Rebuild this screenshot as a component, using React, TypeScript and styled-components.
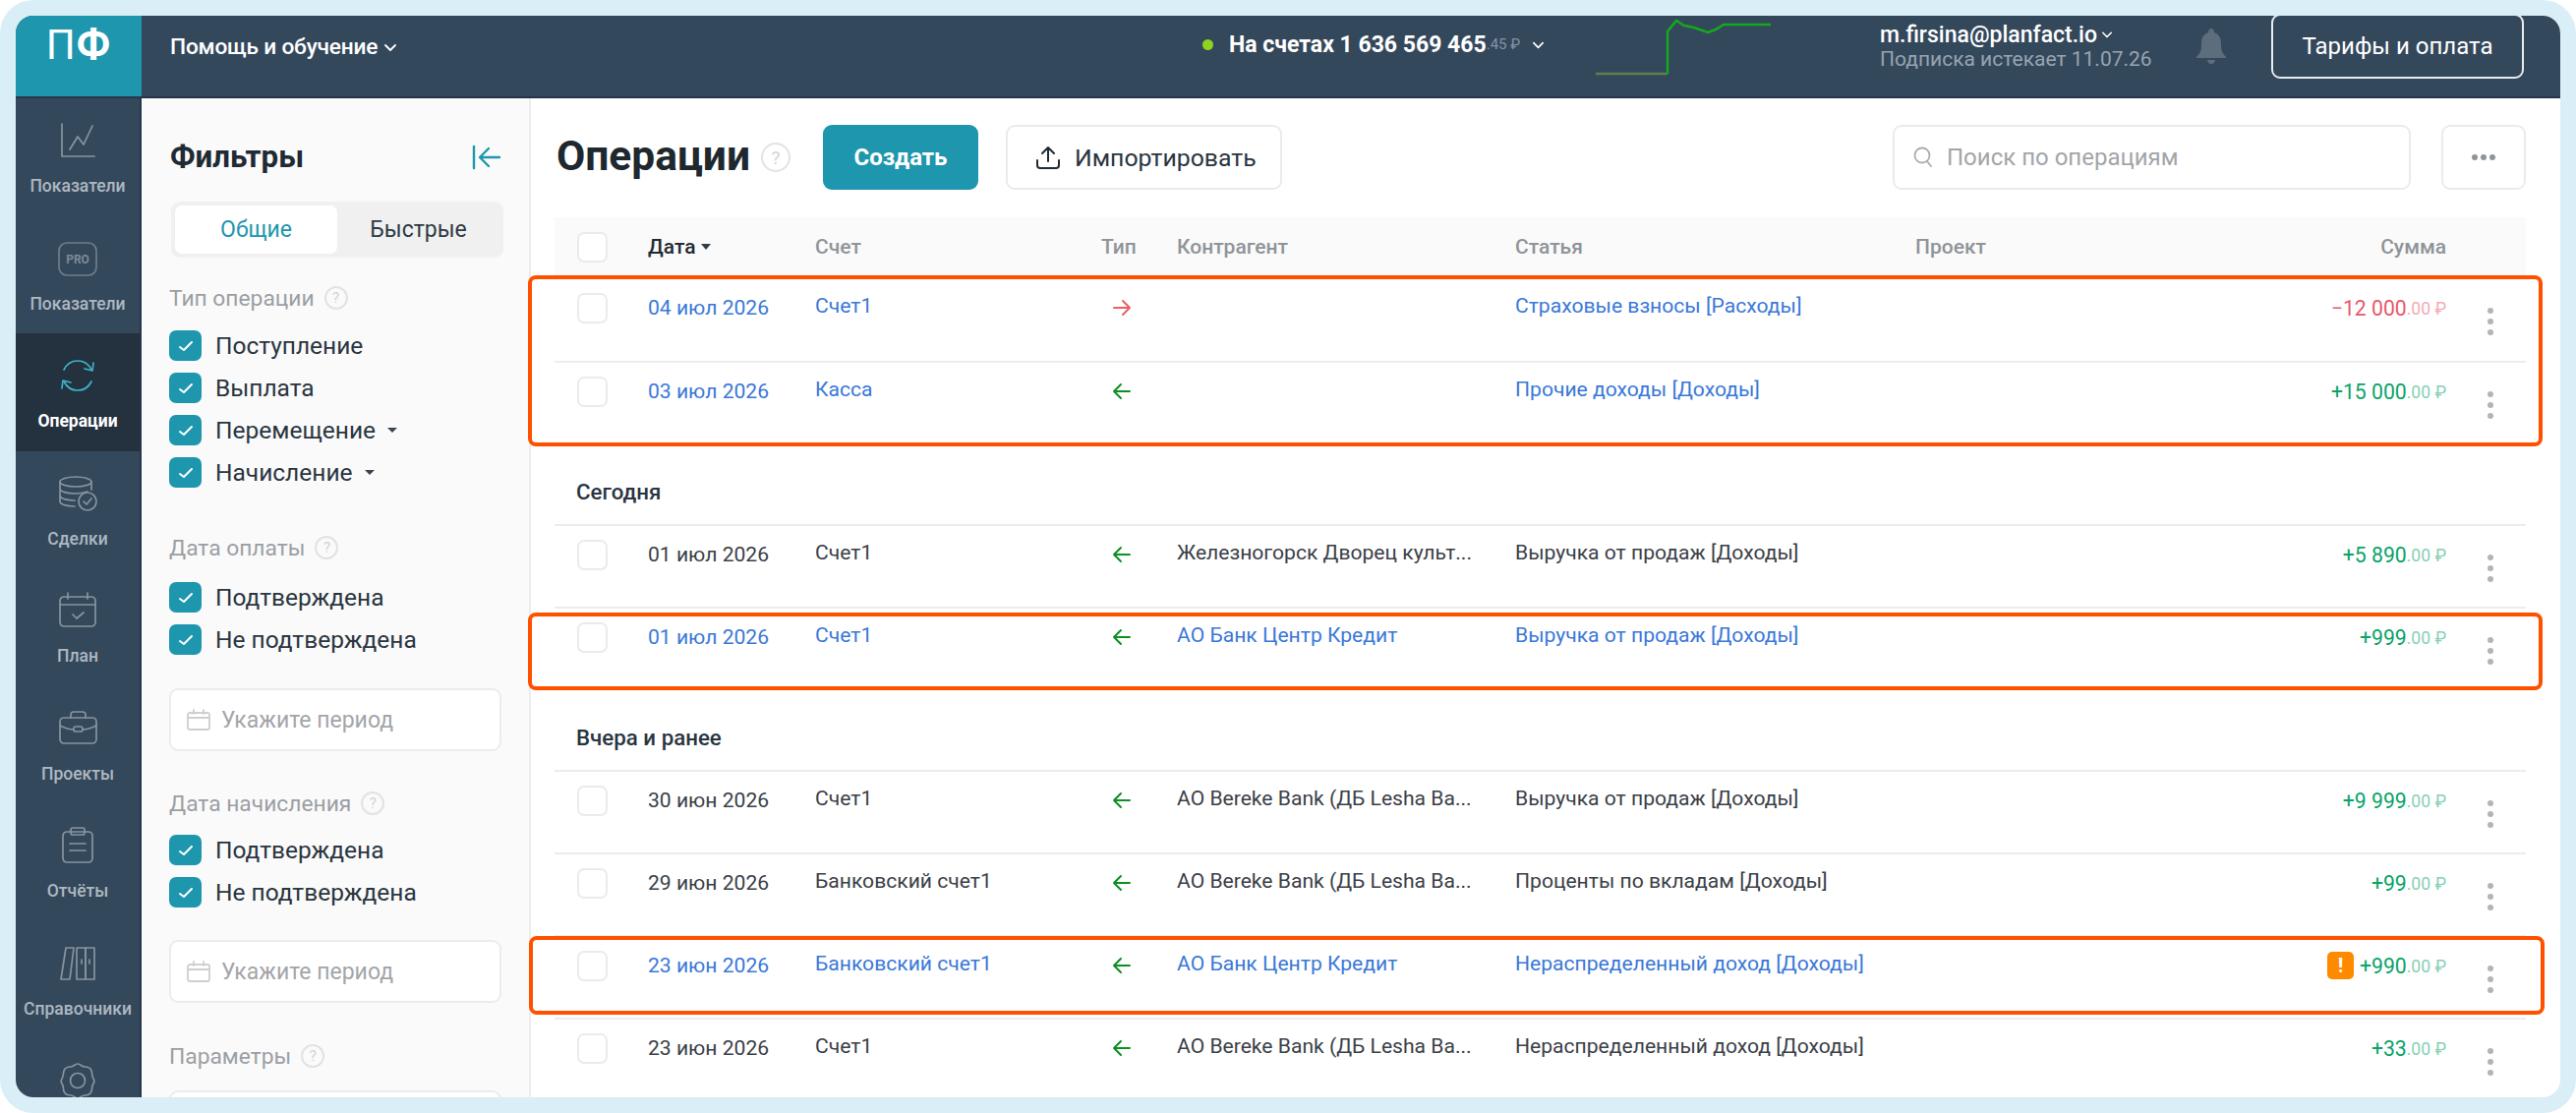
import React from 'react';
import styled, { createGlobalStyle } from 'styled-components';

const GlobalStyle = createGlobalStyle`
  html, body { margin: 0; padding: 0; background: #fff; }
  * { box-sizing: border-box; }
  body { font-family: Roboto, "Noto Sans", sans-serif; color: #222b33; }
`;

const Icon: React.FC<{ size?: number; h?: number; color?: string; sw?: number; vb?: string; children: React.ReactNode }> = ({
  size = 40,
  h,
  color = 'currentColor',
  sw = 1.7,
  vb = '0 0 40 40',
  children,
}) => (
  <svg width={size} height={h ?? size} viewBox={vb} fill="none" stroke={color} strokeWidth={sw} strokeLinecap="round" strokeLinejoin="round">
    {children}
  </svg>
);

const navItems: { label?: string; active?: boolean; icon: React.ReactNode }[] = [
  {
    label: 'Показатели',
    icon: (
      <>
        <path d="M4 3v33h33" />
        <path d="M12 29l8-13 6 8 9-19" />
      </>
    ),
  },
  {
    label: 'Показатели',
    icon: (
      <>
        <rect x="1" y="4" width="38" height="33" rx="8" opacity="0.7" />
        <text x="20" y="25" textAnchor="middle" fontSize="12" fontWeight="700" fill="#7c8a97" stroke="none" fontFamily="Roboto">
          PRO
        </text>
      </>
    ),
  },
  {
    label: 'Операции',
    active: true,
    icon: (
      <>
        <path d="M6 14c3-6 8-9 14-9s11 3 14 9" />
        <path d="M36 7l-1 8-8-2" />
        <path d="M34 26c-3 6-8 9-14 9S9 32 6 26" />
        <path d="M4 33l1-8 8 2" />
      </>
    ),
  },
  {
    label: 'Сделки',
    icon: (
      <>
        <ellipse cx="18" cy="8" rx="16" ry="5" />
        <path d="M2 8v20c0 3 7 5 15 5M34 8v8M2 15c0 3 7 5 16 5 5 0 9-1 12-2M2 22c0 3 7 5 15 5" />
        <circle cx="30" cy="28" r="9" />
        <path d="M26 28l3 3 5-6" />
      </>
    ),
  },
  {
    label: 'План',
    icon: (
      <>
        <rect x="2" y="6" width="36" height="30" rx="4" />
        <path d="M2 14h36M10 2v6M30 2v6M15 24l4 4 7-6" />
      </>
    ),
  },
  {
    label: 'Проекты',
    icon: (
      <>
        <rect x="2" y="9" width="37" height="26" rx="4" />
        <path d="M13 9V6c0-2 1-3 3-3h9c2 0 3 1 3 3v3M2 17c6 3 11 4 14 4M39 17c-6 3-11 4-14 4" />
        <rect x="16" y="18" width="9" height="5" rx="2" />
      </>
    ),
  },
  {
    label: 'Отчёты',
    icon: (
      <>
        <rect x="5" y="6" width="30" height="31" rx="4" />
        <rect x="13" y="2" width="14" height="7" rx="2" />
        <path d="M12 18h16M12 25h16" />
      </>
    ),
  },
  {
    label: 'Справочники',
    icon: (
      <>
        <path d="M8 4h8l-4 32H3z" />
        <rect x="19" y="4" width="9" height="32" />
        <rect x="28" y="4" width="9" height="32" />
        <path d="M24 16v4M32 16v4" />
      </>
    ),
  },
  {
    icon: (
      <>
        <path d="M20 3c3 0 4 3 7 3s6 1 7 4 0 5 2 8c1 2 1 4 0 5-2 3-1 5-2 8s-4 4-7 4-4 3-7 3-4-3-7-3-6-1-7-4 0-5-2-8c-1-1-1-3 0-5 2-3 1-5 2-8s4-4 7-4 4-3 7-3z" />
        <circle cx="20" cy="20" r="7.5" />
      </>
    ),
  },
];

type Op = {
  date: string;
  account: string;
  dir: 'in' | 'out';
  partner?: string;
  article: string;
  whole: string;
  link?: boolean;
  warn?: boolean;
};

const topOps: Op[] = [
  { date: '04 июл 2026', account: 'Счет1', dir: 'out', article: 'Страховые взносы [Расходы]', whole: '−12 000', link: true },
  { date: '03 июл 2026', account: 'Касса', dir: 'in', article: 'Прочие доходы [Доходы]', whole: '+15 000', link: true },
];

const todayOps: Op[] = [
  { date: '01 июл 2026', account: 'Счет1', dir: 'in', partner: 'Железногорск Дворец культ...', article: 'Выручка от продаж [Доходы]', whole: '+5 890' },
  { date: '01 июл 2026', account: 'Счет1', dir: 'in', partner: 'АО Банк Центр Кредит', article: 'Выручка от продаж [Доходы]', whole: '+999', link: true },
];

const pastOps: Op[] = [
  { date: '30 июн 2026', account: 'Счет1', dir: 'in', partner: 'АО Bereke Bank (ДБ Lesha Ba...', article: 'Выручка от продаж [Доходы]', whole: '+9 999' },
  { date: '29 июн 2026', account: 'Банковский счет1', dir: 'in', partner: 'АО Bereke Bank (ДБ Lesha Ba...', article: 'Проценты по вкладам [Доходы]', whole: '+99' },
  { date: '23 июн 2026', account: 'Банковский счет1', dir: 'in', partner: 'АО Банк Центр Кредит', article: 'Нераспределенный доход [Доходы]', whole: '+990', link: true, warn: true },
  { date: '23 июн 2026', account: 'Счет1', dir: 'in', partner: 'АО Bereke Bank (ДБ Lesha Ba...', article: 'Нераспределенный доход [Доходы]', whole: '+33' },
];

const Check = () => (
  <CheckBox>
    <svg width="16" height="14" viewBox="0 0 16 14" fill="none" stroke="#fff" strokeWidth="2" strokeLinecap="round" strokeLinejoin="round">
      <path d="M2 8l4 3 8-8" />
    </svg>
  </CheckBox>
);

const Help = () => <HelpMark>?</HelpMark>;

const CalendarIcon = () => (
  <Icon size={24} h={22} vb="0 0 24 22" color="#cfcfcf" sw={1.8}>
    <rect x="1" y="4" width="22" height="17" rx="2" />
    <path d="M1 9h22M7 1v4M17 1v4" />
  </Icon>
);

const Chevron: React.FC<{ size?: number }> = ({ size = 14 }) => (
  <svg width={size} height={size} viewBox="0 0 14 14" fill="none" stroke="#fff" strokeWidth="1.8" strokeLinecap="round" strokeLinejoin="round">
    <path d="M2 5l5 5 5-5" />
  </svg>
);

const OpRow: React.FC<{ op: Op }> = ({ op }) => (
  <Row>
    <CheckCell>
      <EmptyBox />
    </CheckCell>
    <DateCell $link={op.link}>{op.date}</DateCell>
    <TextCell $link={op.link}>{op.account}</TextCell>
    <ArrowCell>
      <svg width="20" height="18" viewBox="0 0 20 18" fill="none" stroke={op.dir === 'in' ? '#0d9021' : '#ec5f63'} strokeWidth="2" strokeLinecap="round" strokeLinejoin="round">
        {op.dir === 'in' ? <path d="M18 9H2M9 2L2 9l7 7" /> : <path d="M2 9h16M11 2l7 7-7 7" />}
      </svg>
    </ArrowCell>
    <TextCell $link={op.link}>{op.partner}</TextCell>
    <TextCell $link={op.link}>{op.article}</TextCell>
    <AmountCell $out={op.dir === 'out'}>
      {op.warn && <WarnBadge>!</WarnBadge>}
      <strong>{op.whole}</strong>
      <small>.00 ₽</small>
    </AmountCell>
    <DotsCell>
      <i />
      <i />
      <i />
    </DotsCell>
  </Row>
);

const App: React.FC = () => (
  <Frame>
    <GlobalStyle />
    <Window>
      <TopBar>
        <Logo>
          П<b>Ф</b>
        </Logo>
        <HelpMenu>
          Помощь и обучение <Chevron />
        </HelpMenu>
        <Balance>
          <GreenDot />
          <span>На счетах 1 636 569 465</span>
          <small>.45 ₽</small>
          <Chevron size={13} />
        </Balance>
        <Spark>
          <svg width="178" height="62" viewBox="0 0 178 62" fill="none" strokeWidth="2.5">
            <path d="M0 57H73" stroke="#5e7f4d" />
            <path d="M73 57V14L82 3l8 5 10 2 14 5 8-3 8-5h48" stroke="#13a81f" />
          </svg>
        </Spark>
        <UserBlock>
          <UserMail>
            m.firsina@planfact.io <Chevron size={12} />
          </UserMail>
          <UserSub>Подписка истекает 11.07.26</UserSub>
        </UserBlock>
        <Bell>
          <svg width="32" height="36" viewBox="0 0 32 36" fill="#5c6d7c">
            <path d="M16 0c2 0 3 2 3 4 6 2 7 7 7 13 0 6 2 9 5 12v1H1v-1c3-3 5-6 5-12 0-6 1-11 7-13 0-2 1-4 3-4z" />
            <path d="M12 32h8c0 2-2 4-4 4s-4-2-4-4z" />
          </svg>
        </Bell>
        <TariffButton>Тарифы и оплата</TariffButton>
      </TopBar>

      <Body>
        <Sidebar>
          {navItems.map((item, i) => (
            <NavItem key={i} $active={item.active}>
              <NavIcon>
                <Icon>{item.icon}</Icon>
              </NavIcon>
              {item.label && <NavLabel $active={item.active}>{item.label}</NavLabel>}
            </NavItem>
          ))}
        </Sidebar>

        <Filters>
          <FiltersHead>
            <FiltersTitle>Фильтры</FiltersTitle>
            <svg width="30" height="26" viewBox="0 0 30 26" fill="none" stroke="#1e96ae" strokeWidth="2.4" strokeLinecap="round" strokeLinejoin="round">
              <path d="M2 2v22M28 13H9M17 4l-9 9 9 9" />
            </svg>
          </FiltersHead>
          <Tabs>
            <Tab $active>Общие</Tab>
            <Tab>Быстрые</Tab>
          </Tabs>

          <GroupTitle $gap={26} $after={18}>
            Тип операции <Help />
          </GroupTitle>
          <CheckRow>
            <Check /> Поступление
          </CheckRow>
          <CheckRow>
            <Check /> Выплата
          </CheckRow>
          <CheckRow>
            <Check /> Перемещение <Caret />
          </CheckRow>
          <CheckRow>
            <Check /> Начисление <Caret />
          </CheckRow>

          <GroupTitle $gap={46} $after={20}>
            Дата оплаты <Help />
          </GroupTitle>
          <CheckRow>
            <Check /> Подтверждена
          </CheckRow>
          <CheckRow>
            <Check /> Не подтверждена
          </CheckRow>
          <PeriodInput $top={34}>
            <CalendarIcon /> Укажите период
          </PeriodInput>

          <GroupTitle $gap={38} $after={17}>
            Дата начисления <Help />
          </GroupTitle>
          <CheckRow>
            <Check /> Подтверждена
          </CheckRow>
          <CheckRow>
            <Check /> Не подтверждена
          </CheckRow>
          <PeriodInput $top={33}>
            <CalendarIcon /> Укажите период
          </PeriodInput>

          <GroupTitle $gap={39} $after={20}>
            Параметры <Help />
          </GroupTitle>
          <PeriodInput $top={20} />
        </Filters>

        <Main>
          <Toolbar>
            <PageTitle>Операции</PageTitle>
            <PageHelp>?</PageHelp>
            <CreateButton>Создать</CreateButton>
            <ImportButton>
              <svg width="26" height="26" viewBox="0 0 26 26" fill="none" stroke="#222b33" strokeWidth="2" strokeLinecap="round" strokeLinejoin="round">
                <path d="M13 17V3M7 9l6-6 6 6M2 16v5c0 2 1 3 3 3h16c2 0 3-1 3-3v-5" />
              </svg>
              Импортировать
            </ImportButton>
            <SearchBox>
              <svg width="20" height="22" viewBox="0 0 20 22" fill="none" stroke="#a9adb2" strokeWidth="1.8" strokeLinecap="round">
                <circle cx="9" cy="9" r="7.5" />
                <path d="M14 15l4 5" />
              </svg>
              Поиск по операциям
            </SearchBox>
            <MoreButton>
              <i />
              <i />
              <i />
            </MoreButton>
          </Toolbar>

          <HeadRow>
            <CheckCell>
              <EmptyBox />
            </CheckCell>
            <HeadCell $strong>
              Дата <SortCaret />
            </HeadCell>
            <HeadCell>Счет</HeadCell>
            <HeadCell>Тип</HeadCell>
            <HeadCell>Контрагент</HeadCell>
            <HeadCell>Статья</HeadCell>
            <HeadCell>Проект</HeadCell>
            <HeadCell $right>Сумма</HeadCell>
          </HeadRow>

          {topOps.map((op) => (
            <OpRow key={op.date} op={op} />
          ))}
          <Section>Сегодня</Section>
          {todayOps.map((op, i) => (
            <OpRow key={i} op={op} />
          ))}
          <Section>Вчера и ранее</Section>
          {pastOps.map((op, i) => (
            <OpRow key={i} op={op} />
          ))}
        </Main>
      </Body>

      <Highlight $top={264} $height={174} $left={521} $width={2049} />
      <Highlight $top={607} $height={79} $left={521} $width={2049} />
      <Highlight $top={936} $height={80} $left={522} $width={2050} />
    </Window>
  </Frame>
);

export default App;

const tableColumns = '95px 170px 291px 77px 344px 407px 200px 340px 81px';

const Frame = styled.div`
  width: 2620px;
  height: 1132px;
  padding: 16px;
  border-radius: 34px;
  background: #d9eef6;
`;

const Window = styled.div`
  position: relative;
  display: flex;
  flex-direction: column;
  width: 2588px;
  height: 1100px;
  overflow: hidden;
  border-radius: 18px;
  background: #fff;
`;

const TopBar = styled.header`
  display: grid;
  grid-template-columns: 128px 1078px 401px 289px 320px 78px 257px;
  flex: 0 0 83px;
  background: #34485c;
  border-bottom: 2px solid #25364a;
  color: #fff;
`;

const Logo = styled.div`
  height: 82px;
  padding: 8px 0 0 0;
  background: #1e96ae;
  font-size: 42px;
  line-height: 44px;
  font-weight: 400;
  text-align: center;
  letter-spacing: 1px;

  b {
    font-weight: 700;
  }
`;

const HelpMenu = styled.div`
  display: flex;
  align-items: center;
  gap: 6px;
  height: 62px;
  padding-left: 29px;
  font-size: 22.7px;
  font-weight: 500;
  letter-spacing: -0.2px;

  svg {
    margin-top: 2px;
  }
`;

const Balance = styled.div`
  display: flex;
  align-items: center;
  height: 58px;
  font-size: 23px;
  font-weight: 700;

  small {
    margin-right: 12px;
    font-size: 15px;
    font-weight: 400;
    color: #8293a3;
  }
`;

const GreenDot = styled.span`
  width: 11px;
  height: 11px;
  margin: 0 16px 0 1px;
  border-radius: 50%;
  background: #8fd321;
`;

const Spark = styled.div`
  padding-top: 2px;
`;

const UserBlock = styled.div`
  padding-top: 5px;
`;

const UserMail = styled.div`
  display: flex;
  align-items: center;
  gap: 4px;
  height: 28px;
  font-size: 23px;
  font-weight: 500;
`;

const UserSub = styled.div`
  margin-top: -2px;
  font-size: 21px;
  line-height: 26px;
  color: #97a4b0;
`;

const Bell = styled.div`
  padding: 13px 0 0 1px;
`;

const TariffButton = styled.button`
  width: 257px;
  height: 66px;
  margin-top: -2px;
  border: 2px solid #e8ecef;
  border-radius: 9px;
  background: transparent;
  color: #fff;
  font: 400 24px Roboto, sans-serif;
`;

const Body = styled.div`
  display: flex;
  flex: 1;
  min-height: 0;
`;

const Sidebar = styled.nav`
  flex: 0 0 128px;
  background: #34485c;
  border-right: 2px solid #25364a;
`;

const NavItem = styled.div<{ $active?: boolean }>`
  height: 119.5px;
  background: ${(p) => (p.$active ? '#24313f' : 'transparent')};
  color: ${(p) => (p.$active ? '#3fb2c9' : '#87949f')};
  text-align: center;
`;

const NavIcon = styled.div`
  display: flex;
  justify-content: center;
  height: 77px;
  padding-top: 23px;
`;

const NavLabel = styled.div<{ $active?: boolean }>`
  font-size: 17.5px;
  line-height: 24px;
  font-weight: ${(p) => (p.$active ? 700 : 500)};
  color: ${(p) => (p.$active ? '#fff' : '#aeb8c1')};
`;

const Filters = styled.aside`
  flex: 0 0 396px;
  padding: 0 26px 0 28px;
  background: #fafafa;
  border-right: 2px solid #ededed;
  overflow: hidden;
`;

const FiltersHead = styled.div`
  display: flex;
  align-items: center;
  justify-content: space-between;
  height: 40px;
  margin-top: 40px;
  padding: 0 2px 0 1px;
`;

const FiltersTitle = styled.h2`
  margin: 0;
  font-size: 31.3px;
  line-height: 40px;
  font-weight: 700;
  color: #1f2a33;
`;

const Tabs = styled.div`
  display: grid;
  grid-template-columns: 165px 1fr;
  height: 57px;
  margin: 25px 0 0 2px;
  padding: 4px;
  border-radius: 9px;
  background: #f0f0f0;
`;

const Tab = styled.div<{ $active?: boolean }>`
  display: flex;
  align-items: center;
  justify-content: center;
  border-radius: 7px;
  background: ${(p) => (p.$active ? '#fff' : 'transparent')};
  color: ${(p) => (p.$active ? '#1e96ae' : '#2e3a44')};
  font-size: 23px;
`;

const GroupTitle = styled.div<{ $gap: number; $after: number }>`
  display: flex;
  align-items: center;
  gap: 10px;
  height: 30px;
  margin: ${(p) => p.$gap}px 0 ${(p) => p.$after}px;
  font-size: 22.8px;
  color: #9b9fa4;
`;

const HelpMark = styled.span`
  display: inline-flex;
  align-items: center;
  justify-content: center;
  width: 24px;
  height: 24px;
  border: 2px solid #e2e2e2;
  border-radius: 50%;
  font-size: 15px;
  color: #d2d2d2;
`;

const CheckRow = styled.div`
  display: flex;
  align-items: center;
  gap: 14px;
  height: 31px;
  margin-bottom: 12px;
  font-size: 24.5px;
  color: #2a3540;
`;

const CheckBox = styled.span`
  display: flex;
  align-items: center;
  justify-content: center;
  flex: 0 0 33px;
  height: 31px;
  border-radius: 7px;
  background: #1e96ae;
`;

const Caret = styled.span`
  width: 0;
  height: 0;
  margin-left: -2px;
  border-left: 5px solid transparent;
  border-right: 5px solid transparent;
  border-top: 5px solid #3a444e;
`;

const PeriodInput = styled.div<{ $top: number }>`
  display: flex;
  align-items: center;
  gap: 11px;
  width: 338px;
  height: 64px;
  margin-top: ${(p) => p.$top}px;
  padding-left: 16px;
  border: 2px solid #ececef;
  border-radius: 9px;
  background: #fff;
  font-size: 23px;
  color: #a3a5a8;
`;

const Main = styled.main`
  flex: 1;
  min-width: 0;
  padding: 0 35px 0 24px;
  overflow: hidden;
`;

const Toolbar = styled.div`
  display: flex;
  align-items: center;
  height: 66px;
  margin-top: 27px;
`;

const PageTitle = styled.h1`
  margin: -3px 0 0 2px;
  font-size: 42.5px;
  font-weight: 700;
  color: #20282f;
`;

const PageHelp = styled.span`
  display: flex;
  align-items: center;
  justify-content: center;
  width: 30px;
  height: 30px;
  margin: 0 33px 0 11px;
  border: 2px solid #e3e3e3;
  border-radius: 50%;
  color: #d5d5d5;
  font-size: 19px;
`;

const CreateButton = styled.button`
  width: 158px;
  height: 66px;
  border: 0;
  border-radius: 9px;
  background: #1e96ae;
  color: #fff;
  font: 700 24px Roboto, sans-serif;
`;

const ImportButton = styled.button`
  display: flex;
  align-items: center;
  gap: 14px;
  width: 281px;
  height: 66px;
  margin-left: 28px;
  padding-left: 28px;
  border: 2px solid #ebebef;
  border-radius: 9px;
  background: #fff;
  color: #2a3540;
  font: 400 24.8px Roboto, sans-serif;
`;

const SearchBox = styled.div`
  display: flex;
  align-items: center;
  gap: 14px;
  width: 527px;
  height: 66px;
  margin-left: auto;
  padding-left: 19px;
  border: 2px solid #ebebef;
  border-radius: 9px;
  font-size: 24px;
  color: #a3a5a8;
`;

const MoreButton = styled.div`
  display: flex;
  align-items: center;
  justify-content: center;
  gap: 3px;
  width: 86px;
  height: 66px;
  margin-left: 31px;
  border: 2px solid #ebebef;
  border-radius: 9px;

  i {
    width: 6px;
    height: 6px;
    border-radius: 50%;
    background: #8f9499;
  }
`;

const HeadRow = styled.div`
  display: grid;
  grid-template-columns: ${tableColumns};
  align-items: center;
  height: 60px;
  margin-top: 28px;
  background: #fafafa;
`;

const HeadCell = styled.div<{ $strong?: boolean; $right?: boolean }>`
  display: flex;
  align-items: center;
  gap: 6px;
  grid-column: ${(p) => (p.$right ? '8' : 'auto')};
  justify-content: ${(p) => (p.$right ? 'flex-end' : 'flex-start')};
  font-size: 21px;
  font-weight: 500;
  color: ${(p) => (p.$strong ? '#222b33' : '#8f9499')};
`;

const SortCaret = styled.span`
  width: 0;
  height: 0;
  border-left: 5px solid transparent;
  border-right: 5px solid transparent;
  border-top: 6px solid #333d47;
`;

const CheckCell = styled.div`
  padding-left: 23px;
`;

const EmptyBox = styled.div`
  width: 31px;
  height: 31px;
  border: 2px solid #ebebef;
  border-radius: 7px;
  background: #fff;
`;

const Row = styled.div`
  display: grid;
  grid-template-columns: ${tableColumns};
  align-items: start;
  height: 84px;
  padding-top: 14px;
  border-top: 2px solid #ececec;

  &:nth-of-type(3) {
    border-top: 0;
    height: 86px;
    padding-top: 17px;
  }
`;

const DateCell = styled.div<{ $link?: boolean }>`
  font-size: 21.1px;
  line-height: 30px;
  color: ${(p) => (p.$link ? '#3a78d8' : '#3a4047')};
`;

const TextCell = styled.div<{ $link?: boolean }>`
  margin-top: -2px;
  font-size: 21.1px;
  line-height: 30px;
  white-space: nowrap;
  color: ${(p) => (p.$link ? '#3a78d8' : '#3a4047')};
`;

const ArrowCell = styled.div`
  height: 30px;
  padding: 6px 0 0 11px;
`;

const AmountCell = styled.div<{ $out?: boolean }>`
  display: flex;
  grid-column: 7 / 9;
  align-items: center;
  justify-content: flex-end;
  height: 30px;
  color: ${(p) => (p.$out ? '#e8586a' : '#0aa368')};

  strong {
    font-size: 21.2px;
    font-weight: 400;
  }

  small {
    font-size: 17.5px;
    opacity: 0.5;
    margin-top: 2px;
  }
`;

const WarnBadge = styled.span`
  display: flex;
  align-items: center;
  justify-content: center;
  width: 27px;
  height: 28px;
  margin-right: 6px;
  border-radius: 5px;
  background: #ff8a00;
  color: #fff;
  font-size: 21px;
  font-weight: 700;
`;

const DotsCell = styled.div`
  display: flex;
  flex-direction: column;
  align-items: flex-end;
  gap: 5px;
  padding: 15px 33px 0 0;

  i {
    width: 6px;
    height: 6px;
    border-radius: 50%;
    background: #b4b4b4;
  }
`;

const Section = styled.div`
  height: 82px;
  padding: 34px 0 0 22px;
  font-size: 22.3px;
  line-height: 30px;
  font-weight: 500;
  color: #2a3540;
`;

const Highlight = styled.div<{ $top: number; $left: number; $width: number; $height: number }>`
  position: absolute;
  top: ${(p) => p.$top}px;
  left: ${(p) => p.$left}px;
  width: ${(p) => p.$width}px;
  height: ${(p) => p.$height}px;
  border: 4px solid #ff5000;
  border-radius: 8px;
  pointer-events: none;
`;
